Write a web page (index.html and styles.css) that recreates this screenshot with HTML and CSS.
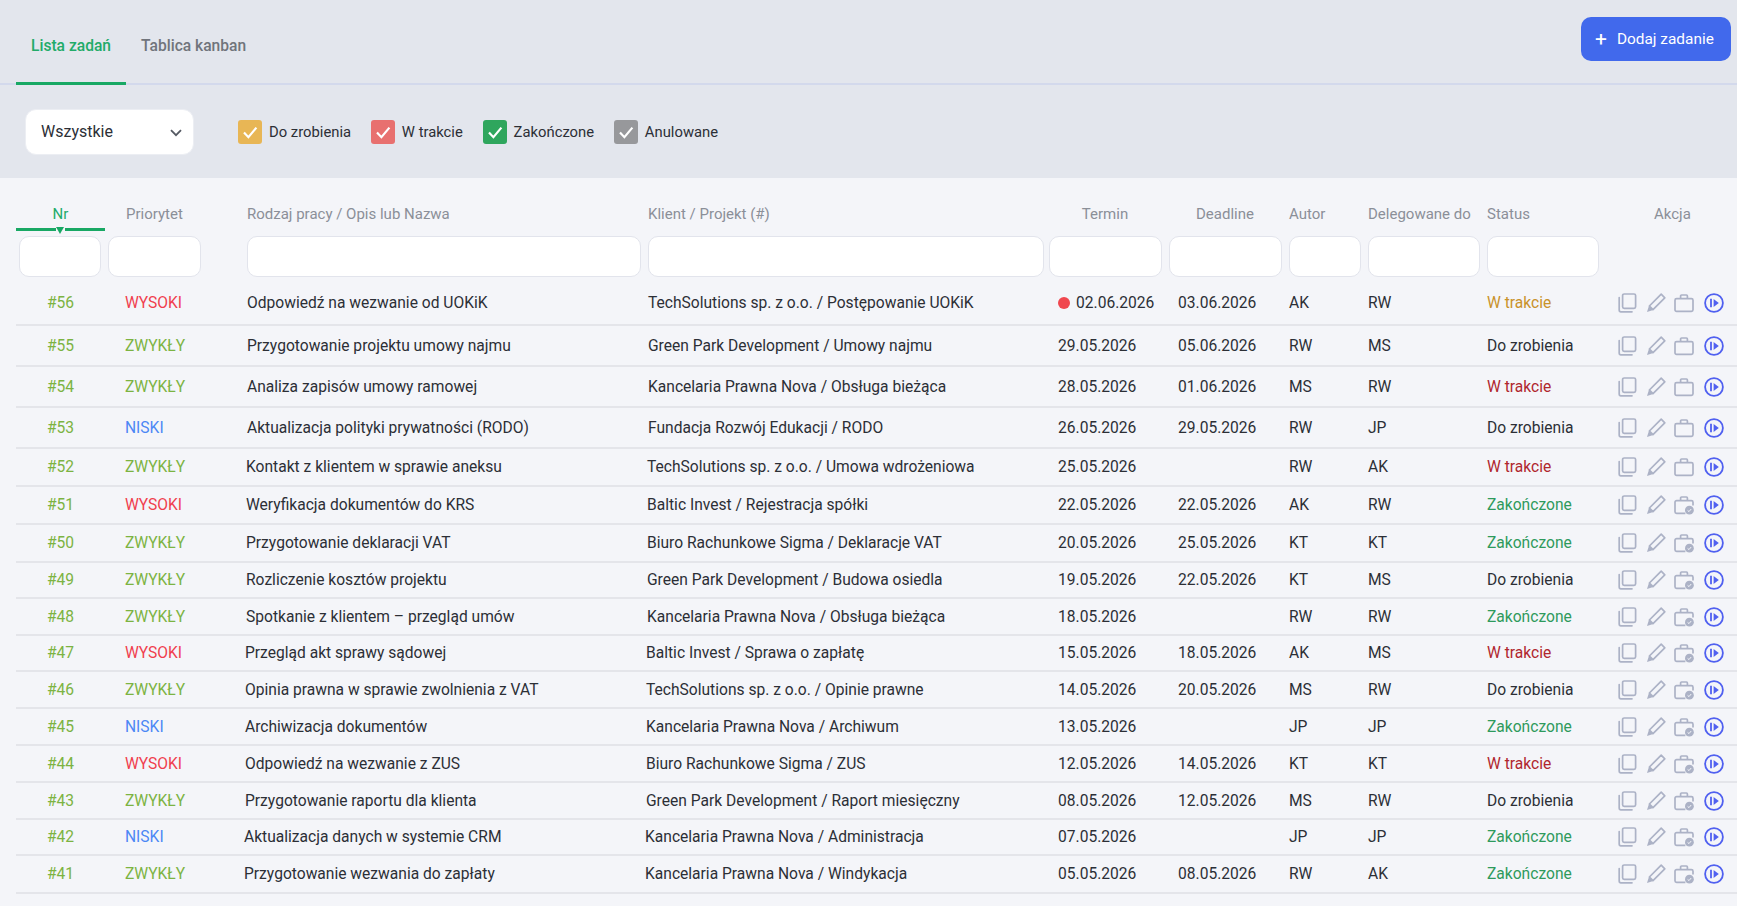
FILE: index.html
```html
<!DOCTYPE html>
<html lang="pl">
<head>
    <meta charset="UTF-8">
    <meta name="viewport" content="width=device-width, initial-scale=1.0">
    <title>Lista zadań</title>
    <link rel="stylesheet" href="styles.css">
</head>
<body>
    <svg class="sprites" width="0" height="0" aria-hidden="true">
        <symbol id="i-copy" viewBox="0 0 20 20">
            <rect x="5.6" y="1" width="13" height="14.4" rx="1.6" fill="none" stroke="currentColor" stroke-width="1.7"/>
            <path d="M2.2 4.6 v12.4 a1.8 1.8 0 0 0 1.8 1.8 h11" fill="none" stroke="currentColor" stroke-width="1.7" stroke-linecap="round"/>
        </symbol>
        <symbol id="i-edit" viewBox="0 0 20 20">
            <path d="M15.2 1.2 l3.6 3.6 L7 16.6 3.4 13 Z" fill="none" stroke="currentColor" stroke-width="1.7" stroke-linejoin="round"/>
            <path d="M3 12.8 l4.2 4.2 -6.2 2 Z" fill="currentColor"/>
        </symbol>
        <symbol id="i-case" viewBox="0 0 20 20">
            <rect x="1" y="5.6" width="18" height="12.8" rx="1.6" fill="none" stroke="currentColor" stroke-width="1.7"/>
            <path d="M6.6 5.6 V3 a1 1 0 0 1 1 -1 h4.8 a1 1 0 0 1 1 1 v2.6" fill="none" stroke="currentColor" stroke-width="1.7"/>
        </symbol>
        <symbol id="i-case-done" viewBox="0 0 20 20">
            <path d="M11.4 18.4 H2.6 a1.6 1.6 0 0 1 -1.6 -1.6 V7.2 a1.6 1.6 0 0 1 1.6 -1.6 h14.8 a1.6 1.6 0 0 1 1.6 1.6 v3.4" fill="none" stroke="currentColor" stroke-width="1.7"/>
            <path d="M6.6 5.6 V3 a1 1 0 0 1 1 -1 h4.8 a1 1 0 0 1 1 1 v2.6" fill="none" stroke="currentColor" stroke-width="1.7"/>
            <circle cx="15.4" cy="15.2" r="4.4" fill="currentColor"/>
            <path d="M13.6 15.4 l1.4 1.2 2.2 -2.6" fill="none" stroke="#f4f5f9" stroke-width="1"/>
        </symbol>
        <symbol id="i-run" viewBox="0 0 20 20">
            <circle cx="10" cy="10" r="8.9" fill="none" stroke="currentColor" stroke-width="1.8"/>
            <path d="M7 5.8 v8.4" fill="none" stroke="currentColor" stroke-width="1.8"/>
            <path d="M9.6 6 l5.2 4 -5.2 4 Z" fill="currentColor"/>
        </symbol>
        <symbol id="i-check" viewBox="0 0 24 24">
            <path d="M6 12.6 l4.4 4.6 8 -9.6" fill="none" stroke="currentColor" stroke-width="2.2"/>
        </symbol>
    </svg>

    <header class="page-head">
        <nav class="tabs">
            <a class="tab active">Lista zadań</a>
            <a class="tab">Tablica kanban</a>
        </nav>
        <button class="btn-add" type="button"><span class="plus">+</span>Dodaj zadanie</button>
    </header>

    <section class="filter-bar">
        <div class="select-wrap">
            <select class="status-select">
                <option>Wszystkie</option>
            </select>
            <svg class="chevron" viewBox="0 0 12 8" width="12" height="8"><path d="M1 1.2 l5 5 5 -5" fill="none" stroke="currentColor" stroke-width="1.8"/></svg>
        </div>
        <div class="checks">
            <label class="check-item"><span class="box box-todo"><svg width="24" height="24"><use href="#i-check"/></svg></span>Do zrobienia</label>
            <label class="check-item"><span class="box box-progress"><svg width="24" height="24"><use href="#i-check"/></svg></span>W trakcie</label>
            <label class="check-item"><span class="box box-done"><svg width="24" height="24"><use href="#i-check"/></svg></span>Zakończone</label>
            <label class="check-item"><span class="box box-cancel"><svg width="24" height="24"><use href="#i-check"/></svg></span>Anulowane</label>
        </div>
    </section>

    <main class="content">
        <table class="tasks">
            <colgroup>
                <col class="c-nr"><col class="c-prio"><col class="c-name"><col class="c-client">
                <col class="c-term"><col class="c-term"><col class="c-author"><col class="c-person"><col class="c-person"><col>
            </colgroup>
            <thead>
                <tr class="labels">
                    <th class="center sorted">Nr</th>
                    <th class="prio-label">Priorytet</th>
                    <th>Rodzaj pracy / Opis lub Nazwa</th>
                    <th>Klient / Projekt (#)</th>
                    <th class="center">Termin</th>
                    <th class="center">Deadline</th>
                    <th>Autor</th>
                    <th>Delegowane do</th>
                    <th>Status</th>
                    <th class="akcja">Akcja</th>
                </tr>
                <tr class="search">
                    <th><input type="text"></th>
                    <th><input class="short" type="text"></th>
                    <th><input type="text"></th>
                    <th class="wide"><input type="text"></th>
                    <th><input type="text"></th>
                    <th><input type="text"></th>
                    <th><input type="text"></th>
                    <th><input type="text"></th>
                    <th><input type="text"></th>
                    <th></th>
                </tr>
            </thead>
            <tbody>
                <tr class="h44">
                    <td class="nr">#56</td><td class="p-high">WYSOKI</td><td>Odpowiedź na wezwanie od UOKiK</td><td>TechSolutions sp. z o.o. / Postępowanie UOKiK</td>
                    <td class="date"><span class="overdue"></span>02.06.2026</td><td class="date">03.06.2026</td><td>AK</td><td>RW</td><td class="s-amber">W trakcie</td>
                    <td><div class="actions"><svg><use href="#i-copy"/></svg><svg><use href="#i-edit"/></svg><svg><use href="#i-case"/></svg><svg class="run"><use href="#i-run"/></svg></div></td>
                </tr>
                <tr class="h41">
                    <td class="nr">#55</td><td class="p-normal">ZWYKŁY</td><td>Przygotowanie projektu umowy najmu</td><td>Green Park Development / Umowy najmu</td>
                    <td class="date">29.05.2026</td><td class="date">05.06.2026</td><td>RW</td><td>MS</td><td>Do zrobienia</td>
                    <td><div class="actions"><svg><use href="#i-copy"/></svg><svg><use href="#i-edit"/></svg><svg><use href="#i-case"/></svg><svg class="run"><use href="#i-run"/></svg></div></td>
                </tr>
                <tr class="h41">
                    <td class="nr">#54</td><td class="p-normal">ZWYKŁY</td><td>Analiza zapisów umowy ramowej</td><td>Kancelaria Prawna Nova / Obsługa bieżąca</td>
                    <td class="date">28.05.2026</td><td class="date">01.06.2026</td><td>MS</td><td>RW</td><td class="s-red">W trakcie</td>
                    <td><div class="actions"><svg><use href="#i-copy"/></svg><svg><use href="#i-edit"/></svg><svg><use href="#i-case"/></svg><svg class="run"><use href="#i-run"/></svg></div></td>
                </tr>
                <tr class="h41">
                    <td class="nr">#53</td><td class="p-low">NISKI</td><td>Aktualizacja polityki prywatności (RODO)</td><td>Fundacja Rozwój Edukacji / RODO</td>
                    <td class="date">26.05.2026</td><td class="date">29.05.2026</td><td>RW</td><td>JP</td><td>Do zrobienia</td>
                    <td><div class="actions"><svg><use href="#i-copy"/></svg><svg><use href="#i-edit"/></svg><svg><use href="#i-case"/></svg><svg class="run"><use href="#i-run"/></svg></div></td>
                </tr>
                <tr class="h38 drift-1">
                    <td class="nr">#52</td><td class="p-normal">ZWYKŁY</td><td>Kontakt z klientem w sprawie aneksu</td><td>TechSolutions sp. z o.o. / Umowa wdrożeniowa</td>
                    <td class="date">25.05.2026</td><td class="date"></td><td>RW</td><td>AK</td><td class="s-red">W trakcie</td>
                    <td><div class="actions"><svg><use href="#i-copy"/></svg><svg><use href="#i-edit"/></svg><svg><use href="#i-case"/></svg><svg class="run"><use href="#i-run"/></svg></div></td>
                </tr>
                <tr class="h38 drift-1">
                    <td class="nr">#51</td><td class="p-high">WYSOKI</td><td>Weryfikacja dokumentów do KRS</td><td>Baltic Invest / Rejestracja spółki</td>
                    <td class="date">22.05.2026</td><td class="date">22.05.2026</td><td>AK</td><td>RW</td><td class="s-green">Zakończone</td>
                    <td><div class="actions"><svg><use href="#i-copy"/></svg><svg><use href="#i-edit"/></svg><svg><use href="#i-case-done"/></svg><svg class="run"><use href="#i-run"/></svg></div></td>
                </tr>
                <tr class="h38 drift-1">
                    <td class="nr">#50</td><td class="p-normal">ZWYKŁY</td><td>Przygotowanie deklaracji VAT</td><td>Biuro Rachunkowe Sigma / Deklaracje VAT</td>
                    <td class="date">20.05.2026</td><td class="date">25.05.2026</td><td>KT</td><td>KT</td><td class="s-green">Zakończone</td>
                    <td><div class="actions"><svg><use href="#i-copy"/></svg><svg><use href="#i-edit"/></svg><svg><use href="#i-case-done"/></svg><svg class="run"><use href="#i-run"/></svg></div></td>
                </tr>
                <tr class="h36 drift-1">
                    <td class="nr">#49</td><td class="p-normal">ZWYKŁY</td><td>Rozliczenie kosztów projektu</td><td>Green Park Development / Budowa osiedla</td>
                    <td class="date">19.05.2026</td><td class="date">22.05.2026</td><td>KT</td><td>MS</td><td>Do zrobienia</td>
                    <td><div class="actions"><svg><use href="#i-copy"/></svg><svg><use href="#i-edit"/></svg><svg><use href="#i-case-done"/></svg><svg class="run"><use href="#i-run"/></svg></div></td>
                </tr>
                <tr class="h37 drift-1">
                    <td class="nr">#48</td><td class="p-normal">ZWYKŁY</td><td>Spotkanie z klientem – przegląd umów</td><td>Kancelaria Prawna Nova / Obsługa bieżąca</td>
                    <td class="date">18.05.2026</td><td class="date"></td><td>RW</td><td>RW</td><td class="s-green">Zakończone</td>
                    <td><div class="actions"><svg><use href="#i-copy"/></svg><svg><use href="#i-edit"/></svg><svg><use href="#i-case-done"/></svg><svg class="run"><use href="#i-run"/></svg></div></td>
                </tr>
                <tr class="h36 drift-2">
                    <td class="nr">#47</td><td class="p-high">WYSOKI</td><td>Przegląd akt sprawy sądowej</td><td>Baltic Invest / Sprawa o zapłatę</td>
                    <td class="date">15.05.2026</td><td class="date">18.05.2026</td><td>AK</td><td>MS</td><td class="s-red">W trakcie</td>
                    <td><div class="actions"><svg><use href="#i-copy"/></svg><svg><use href="#i-edit"/></svg><svg><use href="#i-case-done"/></svg><svg class="run"><use href="#i-run"/></svg></div></td>
                </tr>
                <tr class="h37 drift-2">
                    <td class="nr">#46</td><td class="p-normal">ZWYKŁY</td><td>Opinia prawna w sprawie zwolnienia z VAT</td><td>TechSolutions sp. z o.o. / Opinie prawne</td>
                    <td class="date">14.05.2026</td><td class="date">20.05.2026</td><td>MS</td><td>RW</td><td>Do zrobienia</td>
                    <td><div class="actions"><svg><use href="#i-copy"/></svg><svg><use href="#i-edit"/></svg><svg><use href="#i-case-done"/></svg><svg class="run"><use href="#i-run"/></svg></div></td>
                </tr>
                <tr class="h37 drift-2">
                    <td class="nr">#45</td><td class="p-low">NISKI</td><td>Archiwizacja dokumentów</td><td>Kancelaria Prawna Nova / Archiwum</td>
                    <td class="date">13.05.2026</td><td class="date"></td><td>JP</td><td>JP</td><td class="s-green">Zakończone</td>
                    <td><div class="actions"><svg><use href="#i-copy"/></svg><svg><use href="#i-edit"/></svg><svg><use href="#i-case-done"/></svg><svg class="run"><use href="#i-run"/></svg></div></td>
                </tr>
                <tr class="h37 drift-2">
                    <td class="nr">#44</td><td class="p-high">WYSOKI</td><td>Odpowiedź na wezwanie z ZUS</td><td>Biuro Rachunkowe Sigma / ZUS</td>
                    <td class="date">12.05.2026</td><td class="date">14.05.2026</td><td>KT</td><td>KT</td><td class="s-red">W trakcie</td>
                    <td><div class="actions"><svg><use href="#i-copy"/></svg><svg><use href="#i-edit"/></svg><svg><use href="#i-case-done"/></svg><svg class="run"><use href="#i-run"/></svg></div></td>
                </tr>
                <tr class="h37 drift-2">
                    <td class="nr">#43</td><td class="p-normal">ZWYKŁY</td><td>Przygotowanie raportu dla klienta</td><td>Green Park Development / Raport miesięczny</td>
                    <td class="date">08.05.2026</td><td class="date">12.05.2026</td><td>MS</td><td>RW</td><td>Do zrobienia</td>
                    <td><div class="actions"><svg><use href="#i-copy"/></svg><svg><use href="#i-edit"/></svg><svg><use href="#i-case-done"/></svg><svg class="run"><use href="#i-run"/></svg></div></td>
                </tr>
                <tr class="h36 drift-3">
                    <td class="nr">#42</td><td class="p-low">NISKI</td><td>Aktualizacja danych w systemie CRM</td><td>Kancelaria Prawna Nova / Administracja</td>
                    <td class="date">07.05.2026</td><td class="date"></td><td>JP</td><td>JP</td><td class="s-green">Zakończone</td>
                    <td><div class="actions"><svg><use href="#i-copy"/></svg><svg><use href="#i-edit"/></svg><svg><use href="#i-case-done"/></svg><svg class="run"><use href="#i-run"/></svg></div></td>
                </tr>
                <tr class="h38 drift-3">
                    <td class="nr">#41</td><td class="p-normal">ZWYKŁY</td><td>Przygotowanie wezwania do zapłaty</td><td>Kancelaria Prawna Nova / Windykacja</td>
                    <td class="date">05.05.2026</td><td class="date">08.05.2026</td><td>RW</td><td>AK</td><td class="s-green">Zakończone</td>
                    <td><div class="actions"><svg><use href="#i-copy"/></svg><svg><use href="#i-edit"/></svg><svg><use href="#i-case-done"/></svg><svg class="run"><use href="#i-run"/></svg></div></td>
                </tr>
            </tbody>
        </table>
    </main>
</body>
</html>
```

FILE: styles.css
```css
body {
    margin: 0;
    font-family: Roboto, "Liberation Sans", sans-serif;
    font-size: 15px;
    color: #2c2f36;
    background-color: #f4f5f9;
    overflow: hidden;
}

.sprites {
    position: absolute;
}

/* Top bar */
.page-head {
    display: flex;
    justify-content: space-between;
    height: 83px;
    padding: 0 6px 0 16px;
    background-color: #e3e6ed;
    border-bottom: 2px solid #d3d9ec;
}

.tabs {
    display: flex;
    align-self: flex-end;
    margin-bottom: -2px;
}

.tab {
    height: 45px;
    padding: 20px 15px 0 15px;
    color: #70747b;
    font-size: 15.6px;
    font-weight: 500;
    border-bottom: 3px solid transparent;
}

.tab.active {
    color: #22ab69;
    border-bottom-color: #18a864;
}

.btn-add {
    display: flex;
    align-items: center;
    align-self: flex-start;
    gap: 10px;
    width: 150px;
    height: 44px;
    margin-top: 17px;
    padding: 0 0 0 14px;
    border: none;
    border-radius: 10px;
    background-color: #4169ec;
    color: white;
    font: 400 15.4px Roboto, sans-serif;
}

.plus {
    font-size: 21px;
    font-weight: 400;
    line-height: 1;
}

/* Filter bar */
.filter-bar {
    display: flex;
    align-items: center;
    gap: 44px;
    height: 93px;
    padding-left: 25px;
    background-color: #e3e6ed;
}

.select-wrap {
    position: relative;
}

.status-select {
    display: block;
    width: 169px;
    height: 46px;
    padding-left: 15px;
    appearance: none;
    border: 1.5px solid #eceef3;
    border-radius: 11px;
    background: white;
    color: #2c2f36;
    font: 16px Roboto, sans-serif;
}

.chevron {
    position: absolute;
    right: 12px;
    top: 20px;
    color: #555a63;
}

.checks {
    display: flex;
    gap: 19.8px;
    font-size: 14.8px;
}

.check-item {
    display: flex;
    align-items: center;
    gap: 7px;
}

.box {
    width: 24px;
    height: 24px;
    border-radius: 3px;
    color: white;
}

.box svg {
    display: block;
}

.box-todo { background-color: #e8b655; }
.box-progress { background-color: #e8706f; }
.box-done { background-color: #2fa65d; }
.box-cancel { background-color: #97989b; }

/* Table */
.content {
    padding: 20px 0 0 16px;
}

.tasks {
    width: 1721px;
    table-layout: fixed;
    border-collapse: separate;
    border-spacing: 0;
}

.c-nr { width: 89px; }
.c-prio { width: 138px; }
.c-name { width: 401px; }
.c-client { width: 401px; }
.c-term { width: 120px; }
.c-author { width: 79px; }
.c-person { width: 119px; }

.labels th {
    height: 26px;
    padding: 7px 0 0 4px;
    color: #8b8f98;
    font-weight: 400;
    text-align: left;
    vertical-align: top;
}

.labels th.center {
    padding-left: 0;
    text-align: center;
}

.labels th.prio-label {
    padding-left: 21px;
}

.labels th.akcja {
    padding-left: 52px;
}

.labels th.sorted {
    position: relative;
    color: #22ab69;
    border-bottom: 3px solid #18a864;
    height: 23px;
}

.sorted::before {
    content: "";
    position: absolute;
    left: 40px;
    bottom: -3px;
    width: 9px;
    height: 3px;
    background-color: #f4f5f9;
}

.sorted::after {
    content: "";
    position: absolute;
    left: 40px;
    bottom: -6px;
    border-left: 4.5px solid transparent;
    border-right: 4.5px solid transparent;
    border-top: 7px solid #18a864;
}

.search th {
    height: 41px;
    padding: 5px 3px 5px 4px;
    font-weight: 400;
    text-align: left;
    vertical-align: top;
}

.search th:first-child {
    padding-left: 3px;
}

.search th.wide {
    padding-right: 1px;
}

.search input {
    display: block;
    box-sizing: border-box;
    width: 100%;
    height: 41px;
    border: 1.5px solid #e2e4ec;
    border-radius: 10px;
    background: white;
}

.search th:first-child input {
    width: 82px;
}

.search input.short {
    width: 93px;
    margin-left: -1px;
}

.tasks td {
    padding: 0 0 0 4px;
    font-size: 15.6px;
    border-bottom: 2px solid #e4e5ea;
    white-space: nowrap;
}

.h36 td { height: 34px; }
.h37 td { height: 35px; }
.h38 td { height: 36px; }
.h41 td { height: 39px; }
.h44 td { height: 42px; }

/* the description columns creep left further down the list */
.drift-1 td:nth-child(3), .drift-1 td:nth-child(4) { padding-left: 3px; }
.drift-2 td:nth-child(3), .drift-2 td:nth-child(4) { padding-left: 2px; }
.drift-3 td:nth-child(3), .drift-3 td:nth-child(4) { padding-left: 1px; }

.tasks td.nr {
    padding-left: 0;
    text-align: center;
    color: #7cb342;
}

.tasks td.p-high, .tasks td.p-normal, .tasks td.p-low {
    padding-left: 20px;
}

.p-high { color: #f03e4e; }
.p-normal { color: #7cb342; }
.p-low { color: #4c87f5; }

.tasks td.date {
    padding-left: 13px;
}

.overdue {
    display: inline-block;
    width: 12px;
    height: 12px;
    margin-right: 6px;
    border-radius: 50%;
    background-color: #f0474f;
    vertical-align: -1px;
}

.s-amber { color: #c9922a; }
.s-red { color: #b0272e; }
.s-green { color: #2e9a5c; }

.actions {
    display: flex;
    gap: 8.5px;
    padding-left: 11px;
    color: #acb2c6;
}

.actions svg {
    width: 20px;
    height: 20px;
}

.actions .run {
    margin-left: 1.5px;
    color: #5060f0;
}
```
